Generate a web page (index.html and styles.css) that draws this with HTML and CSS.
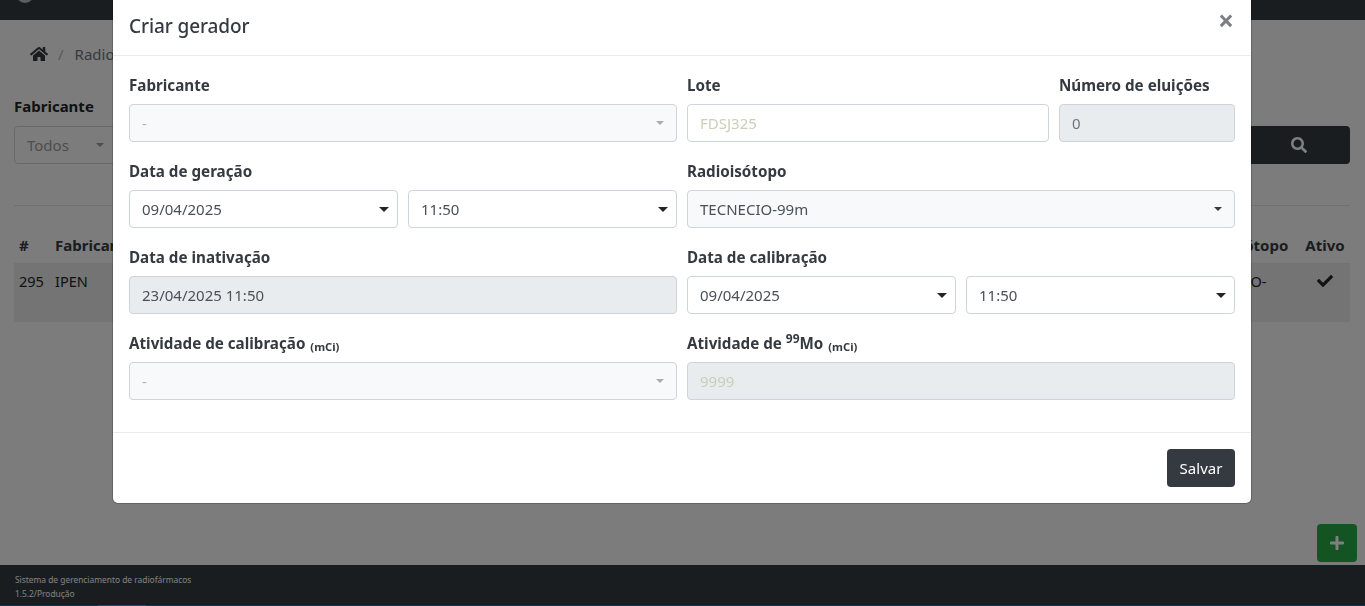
FILE: index.html
```html
<!DOCTYPE html>
<html lang="pt-BR">
<head>
<meta charset="utf-8">
<title>Criar gerador</title>
<link rel="stylesheet" href="styles.css">
</head>
<body>
<div class="page">
  <header class="topbar">
    <svg class="logo" viewBox="0 0 20 20"><circle cx="10" cy="4" r="9" fill="#d8dadc"/></svg>
  </header>
  <main class="content">
    <nav class="crumbs">
      <svg class="home" viewBox="0 0 576 512"><path fill="#343a40" d="M280.4 148.300 96 300.100V464a16 16 0 0 0 16 16l112.100-.3a16 16 0 0 0 15.900-16V368a16 16 0 0 1 16-16h64a16 16 0 0 1 16 16v95.600a16 16 0 0 0 16 16.100L464 480a16 16 0 0 0 16-16V300L295.700 148.300a12.200 12.200 0 0 0-15.300 0zM571.600 251.500 488 182.600V44.100a12 12 0 0 0-12-12h-56a12 12 0 0 0-12 12v72.600L318.500 43a48 48 0 0 0-61 0L4.300 251.500a12 12 0 0 0-1.600 16.900l25.500 31A12 12 0 0 0 45.200 301l235.200-193.700a12.200 12.200 0 0 1 15.300 0L530.900 301a12 12 0 0 0 16.900-1.600l25.500-31a12 12 0 0 0-1.700-16.900z"/></svg>
      <span class="crumb-sep">/</span>
      <span class="crumb-text">Radioisótopos</span>
    </nav>
    <section class="filters">
      <div class="filter">
        <div class="filter-label">Fabricante</div>
        <div class="filter-select"><span>Todos</span><i class="caret caret-muted"></i></div>
      </div>
      <button class="search-btn" type="button">
        <svg class="search-icon" viewBox="0 0 512 512"><path fill="#fff" d="M505 442.700 405.300 343c-4.500-4.500-10.600-7-17-7H372c27.600-35.300 44-79.700 44-128C416 93.100 322.900 0 208 0S0 93.100 0 208s93.100 208 208 208c48.300 0 92.700-16.400 128-44v16.300c0 6.400 2.500 12.500 7 17l99.700 99.700c9.400 9.400 24.600 9.400 33.900 0l28.300-28.300c9.400-9.400 9.400-24.600.1-34zM208 336c-70.700 0-128-57.200-128-128 0-70.700 57.200-128 128-128 70.700 0 128 57.200 128 128 0 70.700-57.200 128-128 128z"/></svg>
      </button>
    </section>
    <table class="grid">
      <thead>
        <tr><th class="c-id">#</th><th class="c-fab">Fabricante</th><th class="c-mid"></th><th class="c-iso">Radioisótopo</th><th class="c-act">Ativo</th></tr>
      </thead>
      <tbody>
        <tr>
          <td class="c-id">295</td><td class="c-fab">IPEN</td><td class="c-mid"></td><td class="c-iso">TECNECIO-</td>
          <td class="c-act"><svg class="check" viewBox="0 0 512 512"><path fill="#212529" d="M173.900 439.400 7.500 273c-10-10-10-26.200 0-36.200l36.200-36.200c10-10 26.200-10 36.200 0L192 312.700 432.100 72.600c10-10 26.200-10 36.200 0l36.200 36.200c10 10 10 26.200 0 36.200L210.100 439.400c-10 10-26.200 10-36.200 0z"/></svg></td>
        </tr>
      </tbody>
    </table>
    <div class="fab-row">
      <button class="fab" type="button"><svg class="plus" viewBox="0 0 448 512"><path fill="#fff" d="M416 208H272V64c0-17.700-14.300-32-32-32h-32c-17.700 0-32 14.300-32 32v144H32c-17.700 0-32 14.300-32 32v32c0 17.700 14.300 32 32 32h144v144c0 17.700 14.300 32 32 32h32c17.700 0 32-14.300 32-32V304h144c17.700 0 32-14.300 32-32v-32c0-17.700-14.300-32-32-32z"/></svg></button>
    </div>
  </main>
  <footer class="footer">
    <div class="footer-text">
      <div>Sistema de gerenciamento de radiofármacos</div>
      <div>1.5.2/Produção</div>
    </div>
    <div class="footer-strip"><span class="footer-seg"></span></div>
  </footer>
</div>

<div class="backdrop"></div>

<div class="modal">
  <div class="modal-head">
    <h1 class="modal-title">Criar gerador</h1>
    <span class="close">×</span>
  </div>
  <div class="modal-body">
    <div class="form-row">
      <div class="field col-half">
        <label>Fabricante</label>
        <div class="control is-disabled-select"><span class="dash">-</span><i class="caret caret-light"></i></div>
      </div>
      <div class="field col-lote">
        <label>Lote</label>
        <div class="control"><span class="placeholder">FDSJ325</span></div>
      </div>
      <div class="field col-elu">
        <label>Número de eluições</label>
        <div class="control is-readonly"><span class="muted">0</span></div>
      </div>
    </div>
    <div class="form-row">
      <div class="field col-half">
        <label>Data de geração</label>
        <div class="pair">
          <div class="control"><span>09/04/2025</span><i class="caret caret-big"></i></div>
          <div class="control"><span>11:50</span><i class="caret caret-big"></i></div>
        </div>
      </div>
      <div class="field col-half">
        <label>Radioisótopo</label>
        <div class="control is-select"><span>TECNECIO-99m</span><i class="caret caret-dark"></i></div>
      </div>
    </div>
    <div class="form-row">
      <div class="field col-half">
        <label>Data de inativação</label>
        <div class="control is-readonly"><span>23/04/2025 11:50</span></div>
      </div>
      <div class="field col-half">
        <label>Data de calibração</label>
        <div class="pair">
          <div class="control"><span>09/04/2025</span><i class="caret caret-big"></i></div>
          <div class="control"><span>11:50</span><i class="caret caret-big"></i></div>
        </div>
      </div>
    </div>
    <div class="form-row">
      <div class="field col-half">
        <label>Atividade de calibração <small>(mCi)</small></label>
        <div class="control is-disabled-select"><span class="dash">-</span><i class="caret caret-light"></i></div>
      </div>
      <div class="field col-half">
        <label>Atividade de <sup>99</sup>Mo <small>(mCi)</small></label>
        <div class="control is-readonly"><span class="placeholder">9999</span></div>
      </div>
    </div>
  </div>
  <div class="modal-foot">
    <button class="save" type="button">Salvar</button>
  </div>
</div>
</body>
</html>
```
FILE: styles.css
```css
* { box-sizing: border-box; }
html, body { margin: 0; height: 100%; overflow: hidden; }
body {
  font-family: "Noto Sans", "Open Sans", sans-serif;
  font-size: 15px;
  color: #212529;
  background: #f8f9fa;
}
.page { height: 606px; display: flex; flex-direction: column; }
.topbar { height: 20px; flex: none; background: #343a40; overflow: hidden; padding-left: 15px; }
.logo { width: 20px; height: 20px; display: block; margin-top: -10px; opacity: .8; }
.content { flex: 1; display: flex; flex-direction: column; padding: 0 15px 0 14px; min-height: 0; }
.crumbs { display: flex; align-items: center; height: 30px; margin-top: 19px; padding-left: 16px; color: #6c757d; }
.home { width: 18px; height: 16px; display: block; }
.crumb-sep { margin: 0 11px 0 10px; color: #adb5bd; }
.crumb-text { font-size: 15px; }
.filters { display: flex; align-items: flex-end; justify-content: space-between; margin-top: 27px; }
.filter-label { font-weight: 700; font-size: 15px; line-height: 20px; margin-bottom: 10px; color: #212529; }
.filter-select { width: 105px; height: 38px; border: 1px solid #ced4da; border-radius: 4px; display: flex; align-items: center; justify-content: space-between; padding: 0 14px 0 12px; color: #9a9a9a; }
.search-btn { width: 260px; height: 38px; border: 0; border-radius: 4px; background: #343a40; display: flex; align-items: center; justify-content: center; padding: 0 0 0 158px; }
.search-icon { width: 16px; height: 16px; }
.grid { width: 100%; border-collapse: collapse; margin-top: 41px; border-top: 1px solid #dee2e6; background: #f8f9fa; table-layout: fixed; }
.grid th { text-align: left; height: 58px; padding: 20px 5px 0; font-size: 15px; font-weight: 700; border-bottom: 1px solid #e8e9ea; color: #343a40; }
.grid td { height: 58px; padding: 7px 5px 0; vertical-align: top; font-size: 14.5px; background: #e8e8e8; color: #212529; }
.c-id { width: 36px; }
.c-fab { width: 200px; }
.c-iso { width: 120px; }
.c-act { width: 50px; }
.grid .c-iso { padding-left: 12px; }
.grid th.c-iso { padding-left: 10px; }
.grid .c-act { text-align: center; }
.grid td.c-act { padding-top: 9px; }
.check { width: 16px; height: 16px; display: inline-block; }
.fab-row { margin-top: auto; display: flex; justify-content: flex-end; padding: 0 0 3px; margin-right: -7px; }
.fab { width: 40px; height: 38px; border: 0; border-radius: 4px; background: #28a745; display: flex; align-items: center; justify-content: center; padding: 0; }
.plus { width: 14px; height: 16px; }
.footer { height: 41px; flex: none; background: #343a40; color: #fff; display: flex; flex-direction: column; justify-content: space-between; }
.footer-text { font-size: 8.4px; line-height: 14px; padding: 8px 15px 0; }
.footer-strip { height: 1px; background: #1a6a9c; padding-left: 98px; }
.footer-seg { display: block; width: 48px; height: 1px; background: #3aa0e0; }
.backdrop { position: fixed; inset: 0; background: rgba(0,0,0,.5); }
.modal { position: fixed; left: 113px; top: -1px; width: 1138px; height: 504px; background: #fff; border-radius: 0 0 5px 5px; display: flex; flex-direction: column; box-shadow: 0 0 0 1px rgba(0,0,0,.2); color: #343a40; }
.modal-head { height: 57px; flex: none; display: flex; align-items: center; justify-content: space-between; padding: 0 16px 3px; border-bottom: 1px solid #e9ecef; }
.modal-title { font-size: 19px; font-weight: 500; letter-spacing: -.1px; margin: 0; line-height: 30px; color: #343a40; }
.close { font-size: 28px; font-weight: 700; color: #7b7f84; line-height: 1; margin-top: -11px; margin-right: 1px; }
.modal-body { flex: 1; padding: 16px 16px 0; display: flex; flex-direction: column; gap: 16px; }
.form-row { display: flex; gap: 10px; }
.field { min-width: 0; display: flex; flex-direction: column; }
.col-half { width: 548px; flex: none; }
.col-lote { width: 362px; flex: none; }
.col-elu { width: 176px; flex: none; }
label { font-weight: 700; font-size: 15.2px; line-height: 26px; height: 24px; margin-bottom: 8px; display: block; color: #343a40; white-space: nowrap; }
small { font-size: 11.2px; vertical-align: -2px; margin-left: 1px; }
sup { font-size: 12px; line-height: 0; vertical-align: 6px; }
.control { height: 38px; flex: none; border: 1px solid #ced4da; border-radius: 4px; display: flex; align-items: center; justify-content: space-between; padding: 0 12px; font-size: 15px; background: #fff; color: #495057; }
.pair .control { flex: 1; min-width: 0; }
.is-readonly { background: #e9ecef; }
.is-disabled-select, .is-select { background: #f8f9fa; }
.muted { color: #6c757d; }
.dash { color: #b4b8bc; }
.placeholder { color: #c9cfb8; }
.pair { display: flex; gap: 10px; }
.caret { display: block; width: 0; height: 0; border-style: solid; border-color: transparent; border-bottom-width: 0; }
.caret-big { border-width: 5px 5.5px 0; border-top-color: #212529; margin-right: -4px; }
.caret-dark { border-width: 4.5px 4.5px 0; border-top-color: #343a40; }
.caret-light { border-width: 4.5px 4.5px 0; border-top-color: #a8adb2; }
.caret-muted { border-width: 4.5px 4.5px 0; border-top-color: #9a9a9a; }
.modal-foot { height: 71px; flex: none; border-top: 1px solid #e9ecef; display: flex; align-items: center; justify-content: flex-end; padding: 0 16px; }
.save { height: 38px; width: 68px; border: 0; border-radius: 4px; background: #343a40; color: #fff; font: inherit; font-size: 15px; padding: 0; }
```
